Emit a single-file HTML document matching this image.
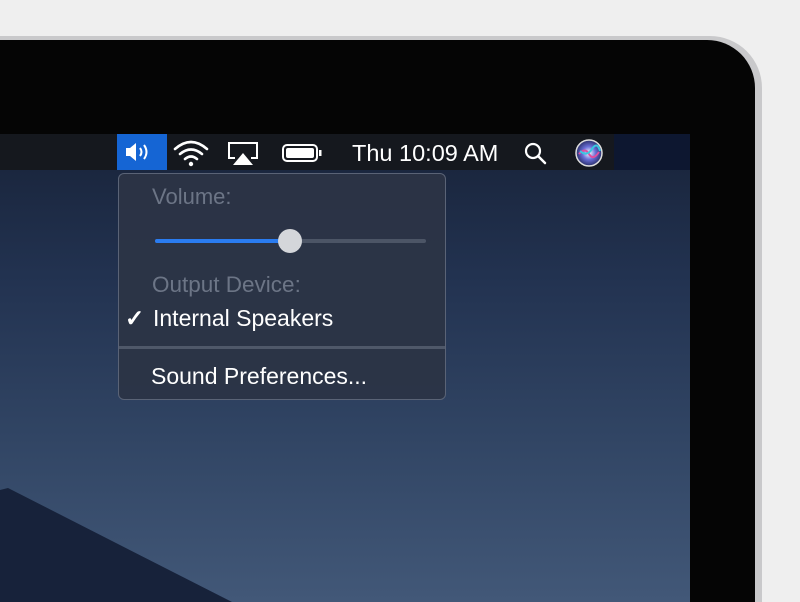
<!DOCTYPE html>
<html style="overflow:hidden;height:602px"><head><style>
body{margin:0;width:800px;height:602px;overflow:hidden;background:#efefef;position:relative;font-family:"Liberation Sans",sans-serif}
.silver{position:absolute;left:-60px;top:36px;width:822px;height:566px;background:#c9c9cb;border-radius:0 52px 0 0}
.black{position:absolute;left:-60px;top:40px;width:815px;height:562px;background:#050505;border-radius:0 48px 0 0}
.screen{position:absolute;left:0;top:134px;width:690px;height:468px;background:linear-gradient(180deg,#182339 0%,#223250 30%,#314564 65%,#425878 100%);overflow:hidden}
.bar{position:absolute;left:0;top:0;width:614px;height:36px;background:#15181e}
.bar2{position:absolute;left:614px;top:0;width:76px;height:36px;background:#0d1730}
.menu{position:absolute;left:118px;top:39px;width:328px;height:227px;background:rgba(44,52,70,.96);border:1px solid #5a6376;border-radius:6px;box-sizing:border-box}
.t{position:absolute;font-size:23px;white-space:nowrap}
</style></head><body>
<div class="silver"></div><div class="black"></div>
<div class="screen">
<svg style="position:absolute;left:0;top:354px" width="240" height="114"><polygon points="0,2 8,0 232,114 0,114" fill="#17223a"/></svg>
<div class="bar"></div><div class="bar2"></div>
<div style="position:absolute;left:117px;top:0;width:50px;height:36px;background:#1565d4"></div>
<svg style="position:absolute;left:124px;top:8px" width="32" height="20"><path d="M2 6h4l6-5v18l-6-5H2z" fill="#fff"/><path d="M16 6q3 4 0 8M20 3q5 7 0 14" stroke="#fff" stroke-width="2" fill="none"/></svg>
<svg style="position:absolute;left:172px;top:5px" width="38" height="28"><path d="M3 10q16-14 32 0M8 15q11-9 22 0M13 20q6-5 12 0" stroke="#fff" stroke-width="2.6" fill="none" stroke-linecap="round"/><circle cx="19" cy="25" r="2.2" fill="#fff"/></svg>
<svg style="position:absolute;left:226px;top:7px" width="34" height="26"><path d="M9 17H3V2h28v15h-6" stroke="#fff" stroke-width="2" fill="none"/><polygon points="17,12 27,24 7,24" fill="#fff"/></svg>
<svg style="position:absolute;left:281px;top:9px" width="42" height="20"><rect x="2" y="2" width="34" height="16" rx="4" stroke="#fff" stroke-width="2" fill="none"/><rect x="5" y="5" width="28" height="10" rx="2" fill="#fff"/><rect x="38" y="7" width="2.5" height="6" fill="#fff"/></svg>
<div class="t" style="left:352px;top:6px;color:#fff;font-size:23.5px">Thu 10:09 AM</div>
<svg style="position:absolute;left:522px;top:7px" width="28" height="26"><circle cx="11" cy="10" r="7" stroke="#fff" stroke-width="2.2" fill="none"/><path d="M16 15l7 7" stroke="#fff" stroke-width="2.5" stroke-linecap="round"/></svg>
<svg style="position:absolute;left:575px;top:5px" width="28" height="28"><defs><radialGradient id="g"><stop offset="0" stop-color="#fff"/><stop offset=".5" stop-color="#6a6fd8"/><stop offset="1" stop-color="#2a2f6a"/></radialGradient></defs><circle cx="14" cy="14" r="13" fill="url(#g)" stroke="#ddd" stroke-width="1.5"/><path d="M4 15q6-7 10 0t10-2" stroke="#e04fa0" stroke-width="2" fill="none"/><path d="M5 12q7 6 12-2t8 2" stroke="#39c8e0" stroke-width="2" fill="none"/></svg>
<div class="menu">
<div class="t" style="left:33px;top:10px;color:#6c7586;font-size:22px">Volume:</div>
<div style="position:absolute;left:36px;top:65px;width:271px;height:4px;border-radius:2px;background:#4c5566"></div>
<div style="position:absolute;left:36px;top:65px;width:136px;height:4px;border-radius:2px;background:#2a7cf0"></div>
<div style="position:absolute;left:159px;top:55px;width:24px;height:24px;border-radius:50%;background:#d4d6da"></div>
<div class="t" style="left:33px;top:98px;color:#6c7586;font-size:22.5px">Output Device:</div>
<div class="t" style="left:6px;top:131px;color:#fff;font-weight:bold">✓</div>
<div class="t" style="left:34px;top:131px;color:#fff">Internal Speakers</div>
<div style="position:absolute;left:0;top:172px;width:326px;height:3px;background:#4f5869"></div>
<div class="t" style="left:32px;top:189px;color:#fff">Sound Preferences...</div>
</div>
</div>
</body></html>
